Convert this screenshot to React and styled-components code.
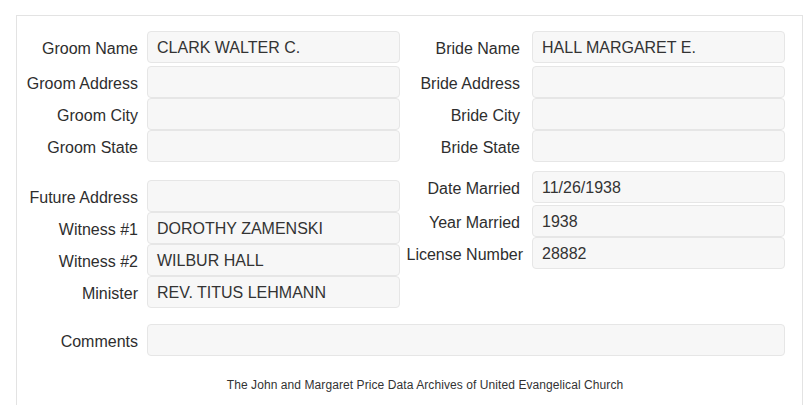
import React from 'react';
import styled, { createGlobalStyle } from 'styled-components';

const GlobalStyle = createGlobalStyle`
  html, body {
    margin: 0;
    padding: 0;
    background: #ffffff;
  }
  body {
    font-family: "Liberation Sans", Arial, sans-serif;
    color: #333333;
    overflow: hidden;
  }
`;

const StyledPage = styled.div`
  padding: 15px 0 0 16px;
`;

const StyledPanel = styled.div`
  box-sizing: border-box;
  width: 787px;
  min-height: 420px;
  border: 1px solid #e3e3e3;
  padding: 15px 16px 0 0;
`;

const StyledColumns = styled.div`
  display: grid;
  grid-template-columns: 383px 383px;
  column-gap: 2px;
  align-items: start;
`;

const StyledColumn = styled.div`
  display: flex;
  flex-direction: column;
`;

const StyledRow = styled.div`
  display: grid;
  grid-template-columns: ${({ $wide }) => ($wide ? '121px 638px' : '121px 253px')};
  column-gap: 9px;
  margin-top: ${({ $mt }) => $mt || 0}px;
`;

const StyledLabel = styled.div`
  align-self: center;
  padding-top: 4px;
  padding-right: ${({ $pr }) => $pr || 0}px;
  text-align: right;
  white-space: nowrap;
  font-size: 16px;
  line-height: 18px;
  color: #2e2e2e;
`;

const StyledValue = styled.div`
  box-sizing: border-box;
  height: 32px;
  padding: 1px 9px 0 9px;
  border: 1px solid #e6e6e6;
  border-radius: 4px;
  background-color: #f7f7f7;
  font-size: 16px;
  line-height: 29px;
  color: #333333;
  white-space: nowrap;
  overflow: hidden;
`;

const StyledFooter = styled.p`
  margin: 21px 0 0 0;
  padding-left: 47px;
  text-align: center;
  font-size: 12px;
  line-height: 17px;
  letter-spacing: 0.08px;
  color: #333333;
`;

const Field = ({ label, value, mt, pr, wide }) => (
  <StyledRow $mt={mt} $wide={wide}>
    <StyledLabel $pr={pr}>{label}</StyledLabel>
    <StyledValue>{value}</StyledValue>
  </StyledRow>
);

const left = [
  { label: 'Groom Name', value: 'CLARK WALTER C.' },
  { label: 'Groom Address', value: '', mt: 3 },
  { label: 'Groom City', value: '' },
  { label: 'Groom State', value: '' },
  { label: 'Future Address', value: '', mt: 18 },
  { label: 'Witness #1', value: 'DOROTHY ZAMENSKI' },
  { label: 'Witness #2', value: 'WILBUR HALL' },
  { label: 'Minister', value: 'REV. TITUS LEHMANN' },
];

const right = [
  { label: 'Bride Name', value: 'HALL MARGARET E.' },
  { label: 'Bride Address', value: '', mt: 3 },
  { label: 'Bride City', value: '' },
  { label: 'Bride State', value: '' },
  { label: 'Date Married', value: '11/26/1938', mt: 9 },
  { label: 'Year Married', value: '1938', mt: 2 },
  { label: 'License Number', value: '28882' },
];

const App = () => (
  <>
    <GlobalStyle />
    <StyledPage>
      <StyledPanel>
        <StyledColumns>
          <StyledColumn>
            {left.map(item => (
              <Field key={item.label} {...item} />
            ))}
          </StyledColumn>
          <StyledColumn>
            {right.map(item => (
              <Field key={item.label} pr={item.label === 'License Number' ? 0 : 3} {...item} />
            ))}
          </StyledColumn>
        </StyledColumns>
        <Field label="Comments" value="" mt={16} wide />
        <StyledFooter>
          The John and Margaret Price Data Archives of United Evangelical Church
        </StyledFooter>
      </StyledPanel>
    </StyledPage>
  </>
);

export default App;
